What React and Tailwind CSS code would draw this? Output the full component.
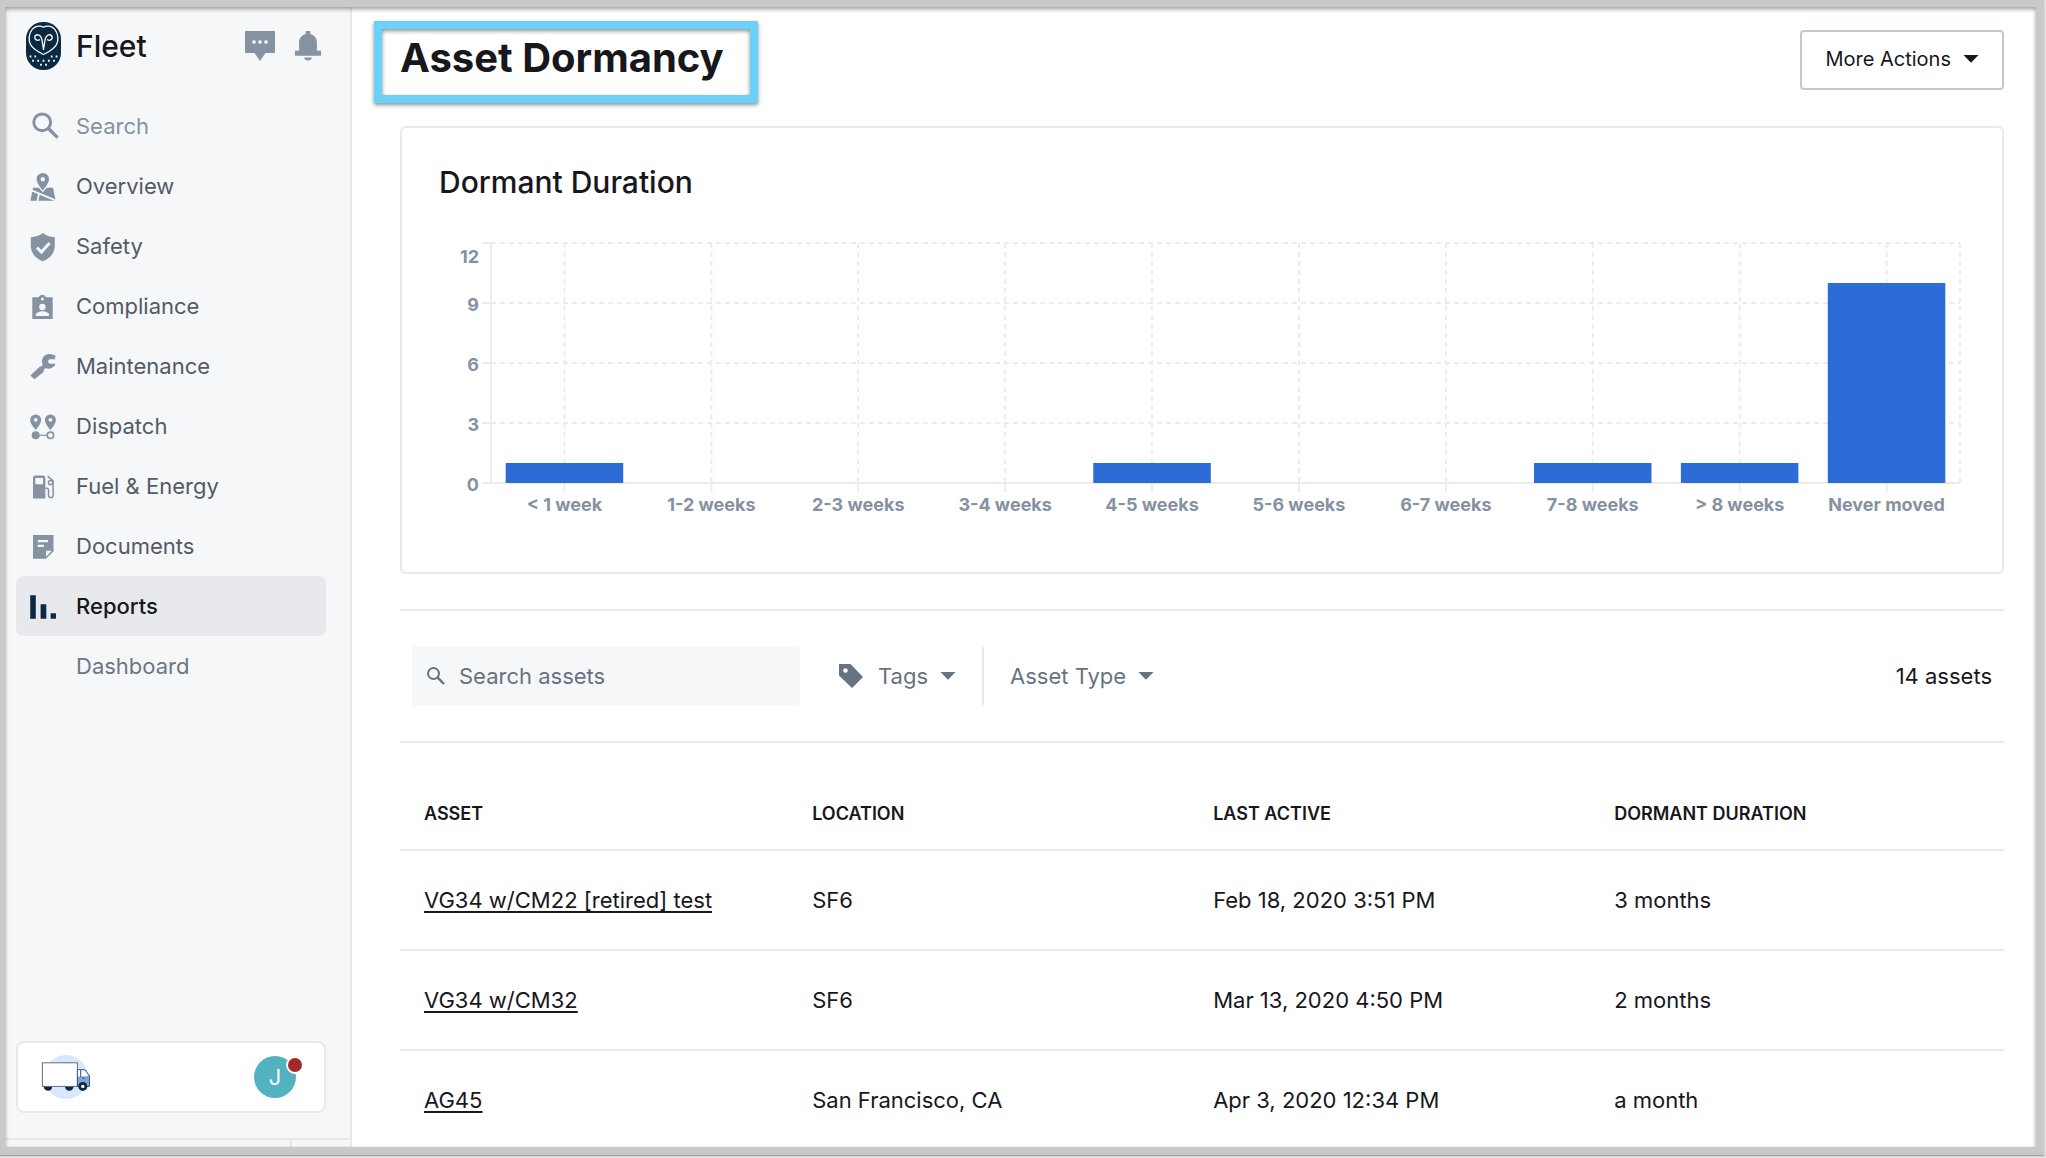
import React, { useState } from "react";

/* ---------- SIDEBAR ICONS ---------- */

const NavIcon = ({ children }) => (
  <svg viewBox="0 0 36 36" className="size-9 shrink-0" fill="currentColor" aria-hidden="true">
    {children}
  </svg>
);

const icons = {
  search: (
    <NavIcon>
      <g fill="none" stroke="currentColor" strokeWidth="3">
        <circle cx="17.2" cy="14.3" r="8.4" />
        <path d="M23.2 20.2l9.4 9.4" strokeWidth="3.4" />
      </g>
    </NavIcon>
  ),
  overview: (
    <NavIcon>
      <path d="M8 19.8h20l2.7 13H5.4z" />
      <path d="M6.5 22.3L31 32.6M14 25.6l-1.6 7.6" stroke="#f6f7f9" strokeWidth="1.8" />
      <path
        d="M17.8 5a6.2 6.2 0 0 0-6.2 6.2c0 4.4 6.2 11.2 6.2 11.2s6.2-6.8 6.2-11.2A6.2 6.2 0 0 0 17.8 5z"
        stroke="#f6f7f9"
        strokeWidth="2.6"
        paintOrder="stroke"
      />
      <circle cx="17.8" cy="11.2" r="2.2" fill="#f6f7f9" />
    </NavIcon>
  ),
  safety: (
    <NavIcon>
      <path d="M17.8 5c3 2.6 7.4 4 12 4.2v8.3c0 8-5 13.3-12 15.8-7-2.5-12-7.8-12-15.8V9.2c4.600-.2 9-1.6 12-4.2z" />
      <path d="M12 19.6l4.4 4.4 8.2-9" fill="none" stroke="#f6f7f9" strokeWidth="3" />
    </NavIcon>
  ),
  compliance: (
    <NavIcon>
      <path d="M7.3 9.3h6.3a3.9 3.9 0 0 1 7.4 0h6.7v21.6H7.3z" />
      <circle cx="17.4" cy="11" r="1.5" fill="#f6f7f9" />
      <circle cx="17.4" cy="19" r="3.2" fill="#f6f7f9" />
      <path d="M10.8 28v-1.5c0-2 4-3.3 6.6-3.3s6.6 1.3 6.6 3.3V28z" fill="#f6f7f9" />
    </NavIcon>
  ),
  maintenance: (
    <NavIcon>
      <path d="M30.5 11.2h-5.6q-1.8.2-1.8 2.3t1.8 2.3h5.8a7.4 7.4 0 0 1-10 4.2L18.9 21.8l-.3 2.3L9.4 31.200 5.400 27.600 14.600 18.700l2.500-.6.600-1.300A7.400 7.400 0 0 1 24 6q3.500-.1 6.500 1.700v1.500l-1.200.6z" />
    </NavIcon>
  ),
  dispatch: (
    <NavIcon>
      <path
        fillRule="evenodd"
        d="M10.7 6.4a5.5 5.5 0 0 0-5.5 5.5c0 3.9 5.5 10 5.5 10s5.5-6.1 5.5-10a5.5 5.5 0 0 0-5.5-5.5zm0 3.5a1.9 1.9 0 1 1 0 3.8 1.9 1.9 0 0 1 0-3.8zM25.4 6.4a5.5 5.5 0 0 0-5.5 5.5c0 3.9 5.5 10 5.5 10s5.5-6.1 5.5-10a5.5 5.5 0 0 0-5.5-5.5zm0 3.5a1.9 1.9 0 1 1 0 3.8 1.9 1.9 0 0 1 0-3.8z"
      />
      <circle cx="10.7" cy="27.3" r="4" />
      <g fill="none" stroke="currentColor">
        <path d="M14 27.3h8" strokeWidth="1.2" />
        <circle cx="25.4" cy="27.3" r="3.2" strokeWidth="1.7" />
      </g>
    </NavIcon>
  ),
  fuel: (
    <NavIcon>
      <path
        fillRule="evenodd"
        d="M10 7.6h8.3q2 0 2 2v20.9H8V9.6q0-2 2-2zm.3 2.5v6.1H18v-6.1z"
      />
      <g fill="none" stroke="currentColor" strokeWidth="1.5">
        <path d="M20.3 20.2h1.4q1.8 0 1.8 1.8v5q0 2.6 2.3 2.6t2.3-2.6V12.8l-5.5-4.6" />
        <circle cx="25.6" cy="14.6" r="2.2" />
      </g>
    </NavIcon>
  ),
  documents: (
    <NavIcon>
      <path d="M8 7h20.5v16.3L21 30.8H8z" />
      <path d="M12.7 13.2h10.2M12.7 17.9h6.2" stroke="#f6f7f9" strokeWidth="2.2" />
      <path d="M21 28.8v-6h5.8z" fill="#f6f7f9" />
    </NavIcon>
  ),
  reports: (
    <NavIcon>
      <path d="M5.2 7.3h5.6v23.5H5.2zM15.6 16.3h5.7v14.5h-5.7zM25.6 25.3H31v5.5h-5.4z" />
    </NavIcon>
  ),
};

const OwlLogo = () => (
  <svg viewBox="0 0 35 48" className="h-12 w-[35px]" role="img" aria-label="Fleet logo">
    <rect width="35" height="48" rx="17" fill="#0a2a43" />
    <g fill="none" stroke="#fff" strokeWidth="1.3" strokeLinecap="round" strokeLinejoin="round">
      <path d="M17.5 5.2C14.5 3.5 9.5 3.6 6.4 7.2 2.6 11.6 2.2 18 4.5 22.5c2.7 5.2 8.5 7.500 13 10 4.500-2.500 10.300-4.800 13-10 2.300-4.500 1.900-10.900-1.900-15.300-3.100-3.600-8.100-3.700-11.100-2z" />
      <path d="M13.5 17.8c-1.300 1-3.800.6-4.500-1.300-.8-2.100.8-4 3-3.700 2.600.4 3.500 2.600 4 5.300l1.500 9.400 1.500-9.400c.5-2.700 1.400-4.900 4-5.300 2.200-.3 3.800 1.600 3 3.700-.7 1.900-3.200 2.300-4.500 1.300" />
    </g>
    <path
      d="M4.500 33.500v2M9.300 33.500v2M25.700 33.500v2M30.500 33.500v2M7 37.700v2M12.200 37.700v2M17.500 37.700v2M22.800 37.700v2M28 37.700v2M15 41.800v2M20 41.800v2"
      stroke="#fff"
      strokeWidth="1.7"
    />
  </svg>
);

const TruckIcon = () => (
  <svg viewBox="0 0 52 48" className="h-12 w-[52px]" aria-hidden="true">
    <circle cx="26" cy="24" r="22" fill="#d9e7fd" />
    <circle cx="8" cy="33.5" r="4.3" fill="#0a2a43" />
    <circle cx="29.3" cy="33.5" r="4.3" fill="#0a2a43" />
    <rect x="2.4" y="9.8" width="35" height="23.6" fill="#fff" stroke="#5b6f86" strokeWidth="1" />
    <path d="M37.4 16.7h7.4l4.7 6v10.7H37.4z" fill="#7fa8d6" stroke="#3d5878" strokeWidth="1" />
    <path d="M37.9 17.2h2.6v6.3h-2.6zM41 17.2h3.5l4.2 5.6-3.2.7H41z" fill="#fff" />
    <path d="M40.7 17v7M42 25h3" stroke="#3d5878" strokeWidth="1" />
    <circle cx="42.8" cy="33.4" r="4.5" fill="#0a2a43" />
    <circle cx="42.8" cy="33.4" r="1.7" fill="#fff" />
  </svg>
);

const Caret = () => (
  <svg viewBox="0 0 16 8" className="h-2 w-4 shrink-0" fill="currentColor" aria-hidden="true">
    <path d="M.5 0h15L8 7.8z" />
  </svg>
);

/* ---------- DATA ---------- */

const navItems = [
  { icon: "overview", label: "Overview" },
  { icon: "safety", label: "Safety" },
  { icon: "compliance", label: "Compliance" },
  { icon: "maintenance", label: "Maintenance" },
  { icon: "dispatch", label: "Dispatch" },
  { icon: "fuel", label: "Fuel & Energy" },
  { icon: "documents", label: "Documents" },
  { icon: "reports", label: "Reports", active: true },
];

const durations = [
  { label: "< 1 week", count: 1 },
  { label: "1-2 weeks", count: 0 },
  { label: "2-3 weeks", count: 0 },
  { label: "3-4 weeks", count: 0 },
  { label: "4-5 weeks", count: 1 },
  { label: "5-6 weeks", count: 0 },
  { label: "6-7 weeks", count: 0 },
  { label: "7-8 weeks", count: 1 },
  { label: "> 8 weeks", count: 1 },
  { label: "Never moved", count: 10 },
];

const assets = [
  { name: "VG34 w/CM22 [retired] test", location: "SF6", lastActive: "Feb 18, 2020 3:51 PM", dormant: "3 months" },
  { name: "VG34 w/CM32", location: "SF6", lastActive: "Mar 13, 2020 4:50 PM", dormant: "2 months" },
  { name: "AG45", location: "San Francisco, CA", lastActive: "Apr 3, 2020 12:34 PM", dormant: "a month" },
];

/* ---------- SIDEBAR ---------- */

function Sidebar() {
  return (
    <aside className="flex w-[347px] shrink-0 flex-col border-r-2 border-[#e6e8ec] bg-[#f6f7f9]">
      <div className="mb-[11px] flex h-[78px] items-center pl-[21px] pr-[29px]">
        <OwlLogo />
        <span className="ml-[15px] flex-1 text-[30px] font-medium leading-9 text-[#17171c]">Fleet</span>
        <button type="button" aria-label="Messages" className="text-[#8492a2]">
          <svg viewBox="0 0 30 30" className="size-[30px]" fill="currentColor">
            <path d="M0 0h30v22h-9.5L15 30l-5.500-8H0z" />
            <path d="M7.500 9.500h3v3h-3zM13.500 9.500h3v3h-3zM19.500 9.500h3v3h-3z" fill="#fff" />
          </svg>
        </button>
        <button type="button" aria-label="Notifications" className="ml-5 text-[#8492a2]">
          <svg viewBox="0 0 26 30" className="h-[30px] w-[26px]" fill="currentColor">
            <path d="M10.7 0h4.600v3c4 1 6.600 4.300 6.600 8.500v8.300H26v5H0v-5h4.100v-8.300c0-4.200 2.600-7.500 6.600-8.500zM9 26.500h8c-.5 2-2 3-4 3s-3.500-1-4-3z" />
          </svg>
        </button>
      </div>

      <nav className="flex-1 pl-[11px] pr-6 text-[22px] leading-[30px] text-[#525b66]">
        <button type="button" className="flex h-[60px] w-full items-center gap-[15px] pl-[9px] text-[#8492a2]">
          {icons.search}
          Search
        </button>
        {navItems.map((item) => (
          <a
            key={item.label}
            href="#"
            aria-current={item.active ? "page" : undefined}
            className={`flex h-[60px] items-center gap-[15px] rounded-lg pl-[9px] ${
              item.active ? "bg-[#e8e9ed] font-medium text-[#17171c]" : ""
            }`}
          >
            <span className={item.active ? "text-[#0a2a43]" : "text-[#8492a2]"}>
              {icons[item.icon]}
            </span>
            {item.label}
          </a>
        ))}
        <a href="#" className="flex h-[60px] items-center pl-[60px] text-[#6b7785]">
          Dashboard
        </a>
      </nav>

      <div className="mb-[25px] ml-[11px] mr-6 flex h-[72px] items-center justify-between rounded-lg border-2 border-[#e8e9ed] bg-white pl-[22px] pr-7">
        <TruckIcon />
        <button
          type="button"
          aria-label="Account"
          className="relative size-[42px] rounded-full bg-[#52b2c0] text-[22px] leading-[42px] text-white"
        >
          J
          <span className="absolute -right-2 top-0 box-content size-[14px] rounded-full border-2 border-white bg-[#a52829]" />
        </button>
      </div>
      <div className="flex h-[9px] border-t-2 border-[#e6e8ec]">
        <div className="flex-1" />
        <div className="w-[60px] border-l-2 border-[#e6e8ec]" />
      </div>
    </aside>
  );
}

/* ---------- CHART ---------- */

function DormancyChart() {
  const max = 12;
  const height = 240;
  const step = 100 / durations.length;

  return (
    <svg
      className="ml-[52px] block h-[290px] w-[calc(100%-64px)] overflow-visible text-[18px] font-bold"
      role="img"
      aria-label="Dormant duration by week"
    >
      {/* grid */}
      <g stroke="#ebecef" strokeWidth="2">
        {[12, 9, 6, 3, 0].map((tick) => {
          const y = height - (tick / max) * height;
          return (
            <g key={tick}>
              <line x1="-9" x2="0" y1={y} y2={y} />
              <line x1="0" x2="100%" y1={y} y2={y} strokeDasharray={tick ? "5 4" : undefined} />
            </g>
          );
        })}
        <line x1="0" x2="0" y1="0" y2={height} />
        <line x1="100%" x2="100%" y1="0" y2={height} strokeDasharray="5 4" />
        {durations.map((d, i) => (
          <g key={d.label}>
            <line x1={`${(i + 0.5) * step}%`} x2={`${(i + 0.5) * step}%`} y1="0" y2={height} strokeDasharray="5 4" />
            <line x1={`${(i + 0.5) * step}%`} x2={`${(i + 0.5) * step}%`} y1={height} y2={height + 9} />
          </g>
        ))}
      </g>

      {/* bars */}
      {durations.map((d, i) => (
        <rect
          key={d.label}
          x={`${(i + 0.1) * step}%`}
          y={height - (d.count / max) * height}
          width={`${step * 0.8}%`}
          height={(d.count / max) * height}
          fill="#2d6cd7"
        />
      ))}

      {/* labels */}
      <g fill="#8492a2" textAnchor="end">
        <text x="-12" y="20">12</text>
        <text x="-12" y="68">9</text>
        <text x="-12" y="128">6</text>
        <text x="-12" y="188">3</text>
        <text x="-12" y="248">0</text>
      </g>
      <g fill="#8492a2" textAnchor="middle">
        {durations.map((d, i) => (
          <text key={d.label} x={`${(i + 0.5) * step}%`} y="268">
            {d.label}
          </text>
        ))}
      </g>
    </svg>
  );
}

/* ---------- PAGE ---------- */

export default function App() {
  const [query, setQuery] = useState("");

  return (
    <div className="h-screen bg-[#e2e2e2] pb-[3px] pr-[2px] font-['Inter','Liberation_Sans',sans-serif] text-[#17171c]">
      <div className="relative flex h-full overflow-hidden border-b-8 border-l-[5px] border-r-8 border-t-[7px] border-[#c9c9c9] bg-white shadow-[0_1px_1px_#a0a0a0]">
        <Sidebar />

        <main className="min-w-0 flex-1 overflow-hidden pl-12 pr-8 pt-[14px]">
          <header className="-ml-[26px] mb-[23px] flex items-start justify-between">
            <h1 className="h-[82px] border-8 border-[#6bd1f9] pl-[18px] pr-[26px] pt-[5px] text-[40px] font-bold leading-[48px] shadow-[0_2px_4px_rgba(0,0,0,0.45),inset_0_2px_4px_rgba(0,0,0,0.45)]">
              Asset Dormancy
            </h1>
            <button
              type="button"
              className="mt-[9px] flex h-[60px] items-center gap-3 rounded border-2 border-[#c2c7d2] px-[23px] pb-[2px] text-[20px] leading-6"
            >
              More Actions
              <Caret />
            </button>
          </header>

          <section className="h-[448px] rounded-md border-2 border-[#e8e9ed] pl-[37px] pr-[30px] pt-[36px]">
            <h2 className="mb-[43px] text-[30px] font-medium leading-9">Dormant Duration</h2>
            <DormancyChart />
          </section>

          <div className="mt-[35px] flex h-[134px] items-center border-y-2 border-[#e8e9ed] px-3 text-[22px] leading-[30px] text-[#667380]">
            <label className="flex h-[60px] w-[388px] items-center gap-[13px] rounded bg-[#f6f7f9] pl-[14px]">
              <svg viewBox="0 0 20 20" className="size-5 shrink-0" fill="none" stroke="currentColor" aria-hidden="true">
                <circle cx="7.5" cy="7.5" r="5.5" strokeWidth="2" />
                <path d="M11.7 11.7l6.3 6.3" strokeWidth="2.4" />
              </svg>
              <input
                type="text"
                aria-label="Search assets"
                placeholder="Search assets"
                value={query}
                onChange={(e) => setQuery(e.target.value)}
                className="min-w-0 flex-1 bg-transparent outline-none placeholder:text-[#667380]"
              />
            </label>

            <button type="button" className="ml-[39px] flex h-[58px] items-center pr-[26px]">
              <svg viewBox="0 0 24 24" className="mr-[15px] size-6" fill="currentColor" aria-hidden="true">
                <path fillRule="evenodd" d="M0 0h11.5L24 13 13 24 0 11.500zM6.500 4.200a2.300 2.300 0 1 0 0 4.600 2.300 2.300 0 0 0 0-4.600z" />
              </svg>
              <span className="mr-3">Tags</span>
              <Caret />
            </button>
            <button type="button" className="flex h-[58px] items-center gap-3 border-l-2 border-[#e8e9ed] pl-[26px]">
              Asset Type
              <Caret />
            </button>

            <p className="ml-auto text-[#17171c]">14 assets</p>
          </div>

          <table className="w-full table-fixed text-left">
            <thead>
              <tr className="h-[107px] border-b-2 border-[#e8e9ed] text-[18px] leading-6">
                <th className="w-[24.2%] pl-6 pt-9 font-semibold">ASSET</th>
                <th className="w-[25%] pl-6 pt-9 font-semibold">LOCATION</th>
                <th className="w-[25%] pl-6 pt-9 font-semibold">LAST ACTIVE</th>
                <th className="pl-6 pt-9 font-semibold">DORMANT DURATION</th>
              </tr>
            </thead>
            <tbody className="text-[22px] leading-[30px]">
              {assets.map((asset) => (
                <tr key={asset.name} className="h-[100px] border-b-2 border-[#e8e9ed]">
                  <td className="whitespace-nowrap pl-6">
                    <a href="#" className="underline decoration-2 underline-offset-3">
                      {asset.name}
                    </a>
                  </td>
                  <td className="pl-6">{asset.location}</td>
                  <td className="pl-6">{asset.lastActive}</td>
                  <td className="pl-6">{asset.dormant}</td>
                </tr>
              ))}
            </tbody>
          </table>
        </main>

        {/* inner frame shadow */}
        <div className="pointer-events-none absolute inset-0 shadow-[inset_0_2px_4px_rgba(0,0,0,0.4)]" />
      </div>
    </div>
  );
}
